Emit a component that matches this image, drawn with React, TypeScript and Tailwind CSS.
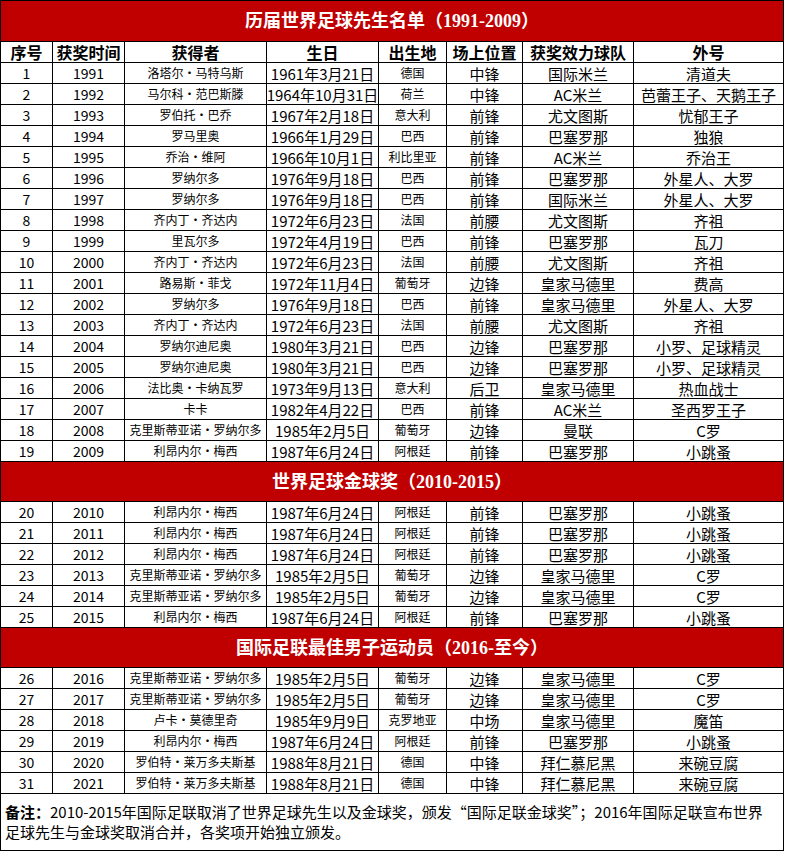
import React from "react";

type Row = [string, string, string, string, string, string, string, string];

const D = "・";
const MESSI = `利昂内尔${D}梅西`;
const CR = `克里斯蒂亚诺${D}罗纳尔多`;
const ZZ = `齐内丁${D}齐达内`;
const LEWA = `罗伯特${D}莱万多夫斯基`;

const s1: Row[] = [
  ["1", "1991", `洛塔尔${D}马特乌斯`, "1961年3月21日", "德国", "中锋", "国际米兰", "清道夫"],
  ["2", "1992", `马尔科${D}范巴斯滕`, "1964年10月31日", "荷兰", "中锋", "AC米兰", "芭蕾王子、天鹅王子"],
  ["3", "1993", `罗伯托${D}巴乔`, "1967年2月18日", "意大利", "前锋", "尤文图斯", "忧郁王子"],
  ["4", "1994", "罗马里奥", "1966年1月29日", "巴西", "前锋", "巴塞罗那", "独狼"],
  ["5", "1995", `乔治${D}维阿`, "1966年10月1日", "利比里亚", "前锋", "AC米兰", "乔治王"],
  ["6", "1996", "罗纳尔多", "1976年9月18日", "巴西", "前锋", "巴塞罗那", "外星人、大罗"],
  ["7", "1997", "罗纳尔多", "1976年9月18日", "巴西", "前锋", "国际米兰", "外星人、大罗"],
  ["8", "1998", ZZ, "1972年6月23日", "法国", "前腰", "尤文图斯", "齐祖"],
  ["9", "1999", "里瓦尔多", "1972年4月19日", "巴西", "前锋", "巴塞罗那", "瓦刀"],
  ["10", "2000", ZZ, "1972年6月23日", "法国", "前腰", "尤文图斯", "齐祖"],
  ["11", "2001", `路易斯${D}菲戈`, "1972年11月4日", "葡萄牙", "边锋", "皇家马德里", "费高"],
  ["12", "2002", "罗纳尔多", "1976年9月18日", "巴西", "前锋", "皇家马德里", "外星人、大罗"],
  ["13", "2003", ZZ, "1972年6月23日", "法国", "前腰", "尤文图斯", "齐祖"],
  ["14", "2004", "罗纳尔迪尼奥", "1980年3月21日", "巴西", "边锋", "巴塞罗那", "小罗、足球精灵"],
  ["15", "2005", "罗纳尔迪尼奥", "1980年3月21日", "巴西", "边锋", "巴塞罗那", "小罗、足球精灵"],
  ["16", "2006", `法比奥${D}卡纳瓦罗`, "1973年9月13日", "意大利", "后卫", "皇家马德里", "热血战士"],
  ["17", "2007", "卡卡", "1982年4月22日", "巴西", "前锋", "AC米兰", "圣西罗王子"],
  ["18", "2008", CR, "1985年2月5日", "葡萄牙", "边锋", "曼联", "C罗"],
  ["19", "2009", MESSI, "1987年6月24日", "阿根廷", "前锋", "巴塞罗那", "小跳蚤"],
];

const s2: Row[] = [
  ["20", "2010", MESSI, "1987年6月24日", "阿根廷", "前锋", "巴塞罗那", "小跳蚤"],
  ["21", "2011", MESSI, "1987年6月24日", "阿根廷", "前锋", "巴塞罗那", "小跳蚤"],
  ["22", "2012", MESSI, "1987年6月24日", "阿根廷", "前锋", "巴塞罗那", "小跳蚤"],
  ["23", "2013", CR, "1985年2月5日", "葡萄牙", "边锋", "皇家马德里", "C罗"],
  ["24", "2014", CR, "1985年2月5日", "葡萄牙", "边锋", "皇家马德里", "C罗"],
  ["25", "2015", MESSI, "1987年6月24日", "阿根廷", "前锋", "巴塞罗那", "小跳蚤"],
];

const s3: Row[] = [
  ["26", "2016", CR, "1985年2月5日", "葡萄牙", "边锋", "皇家马德里", "C罗"],
  ["27", "2017", CR, "1985年2月5日", "葡萄牙", "边锋", "皇家马德里", "C罗"],
  ["28", "2018", `卢卡${D}莫德里奇`, "1985年9月9日", "克罗地亚", "中场", "皇家马德里", "魔笛"],
  ["29", "2019", MESSI, "1987年6月24日", "阿根廷", "前锋", "巴塞罗那", "小跳蚤"],
  ["30", "2020", LEWA, "1988年8月21日", "德国", "中锋", "拜仁慕尼黑", "来碗豆腐"],
  ["31", "2021", LEWA, "1988年8月21日", "德国", "中锋", "拜仁慕尼黑", "来碗豆腐"],
];

const widths = [
  "w-[52px] border-r border-black",
  "w-[72px] border-r border-black",
  "w-[142px] border-r border-black",
  "w-[112px] border-r border-black",
  "w-[68px] border-r border-black",
  "w-[76px] border-r border-black",
  "w-[111px] border-r border-black",
  "w-[149px]",
];

const sizes = [
  "text-[14px]",
  "text-[14px]",
  "text-[12px]",
  "text-[15px] text-[#222]",
  "text-[12px]",
  "text-[15px]",
  "text-[15px]",
  "text-[15px]",
];

const headers = ["序号", "获奖时间", "获得者", "生日", "出生地", "场上位置", "获奖效力球队", "外号"];

function DataRow({ r }: { r: Row }) {
  return (
    <div className="flex h-[21px] border-b border-black">
      {r.map((c, i) => (
        <div
          key={i}
          className={`${widths[i]} ${sizes[i]} flex shrink-0 items-center justify-center overflow-hidden whitespace-nowrap leading-none text-black`}
        >
          {c}
        </div>
      ))}
    </div>
  );
}

function Banner({ text, h }: { text: string; h: string }) {
  return (
    <div
      className={`${h} flex items-center justify-center border-b border-black bg-[#c00000] text-[18px] font-bold leading-none text-white [font-family:'Liberation_Serif','Noto_Sans_CJK_SC',serif]`}
    >
      {text}
    </div>
  );
}

export default function App() {
  return (
    <div className="w-[787px] h-[852px] bg-white [font-family:'Noto_Sans_CJK_SC',sans-serif]">
      <div className="w-[784px] border border-black">
        <Banner text="历届世界足球先生名单（1991-2009）" h="h-[41px]" />
        <div className="flex h-[21px] border-b border-black">
          {headers.map((c, i) => (
            <div
              key={i}
              className={`${widths[i]} flex shrink-0 items-center justify-center whitespace-nowrap text-[16px] font-bold leading-none text-black`}
            >
              {c}
            </div>
          ))}
        </div>
        {s1.map((r) => (
          <DataRow key={r[0]} r={r} />
        ))}
        <Banner text="世界足球金球奖（2010-2015）" h="h-[40px]" />
        {s2.map((r) => (
          <DataRow key={r[0]} r={r} />
        ))}
        <Banner text="国际足联最佳男子运动员（2016-至今）" h="h-[40px]" />
        {s3.map((r) => (
          <DataRow key={r[0]} r={r} />
        ))}
        <div className="h-[56px] pl-[4px] pt-[8px] text-[15px] leading-[20px] text-black">
          <div className="whitespace-nowrap">
            <span className="font-bold">备注：</span>
            2010-2015年国际足联取消了世界足球先生以及金球奖，颁发“国际足联金球奖”；2016年国际足联宣布世界
          </div>
          <div className="whitespace-nowrap">足球先生与金球奖取消合并，各奖项开始独立颁发。</div>
        </div>
      </div>
    </div>
  );
}
